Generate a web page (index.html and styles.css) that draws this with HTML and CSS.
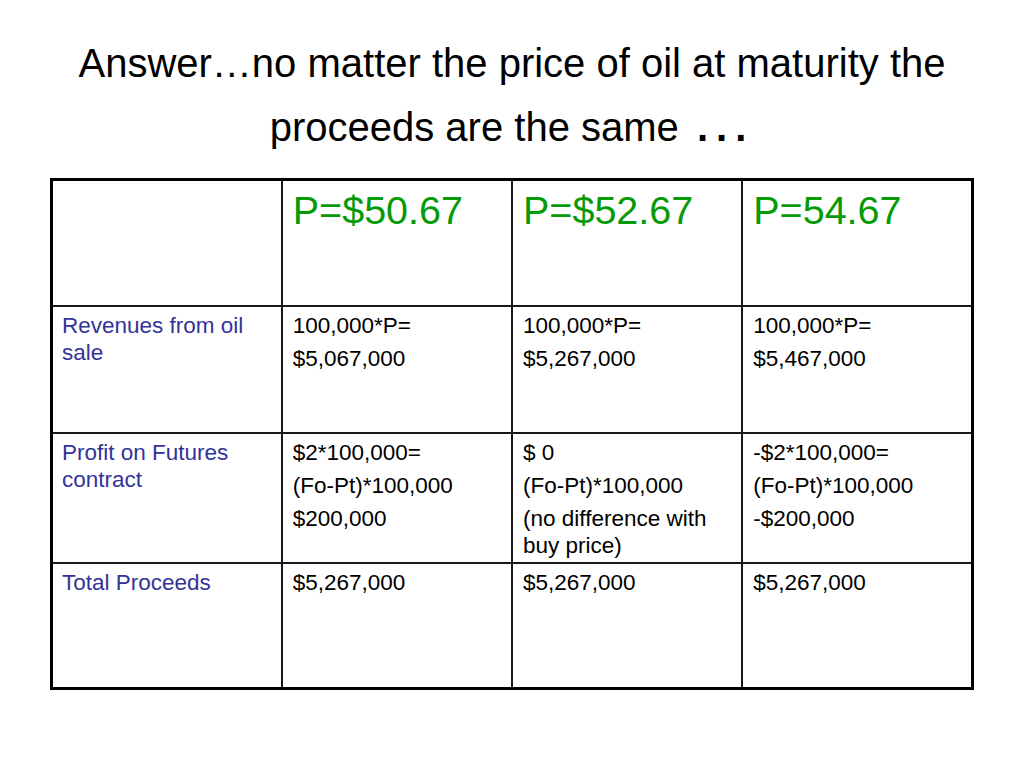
FILE: index.html
```html
<!DOCTYPE html>
<html>
<head>
<meta charset="utf-8">
<link rel="stylesheet" href="styles.css">
</head>
<body>
<h1 class="title">Answer…no matter the price of oil at maturity the<br>proceeds are the same <span class="dots">...</span></h1>
<table class="grid">
  <colgroup><col><col><col><col></colgroup>
  <tr class="r-head">
    <td></td>
    <td class="price">P=$50.67</td>
    <td class="price">P=$52.67</td>
    <td class="price">P=54.67</td>
  </tr>
  <tr class="r-1">
    <td class="label">Revenues from oil sale</td>
    <td><p>100,000*P=</p><p>$5,067,000</p></td>
    <td><p>100,000*P=</p><p>$5,267,000</p></td>
    <td><p>100,000*P=</p><p>$5,467,000</p></td>
  </tr>
  <tr class="r-2">
    <td class="label">Profit on Futures contract</td>
    <td><p>$2*100,000=</p><p>(Fo-Pt)*100,000</p><p>$200,000</p></td>
    <td><p>$ 0</p><p>(Fo-Pt)*100,000</p><p>(no difference with buy price)</p></td>
    <td><p>-$2*100,000=</p><p>(Fo-Pt)*100,000</p><p>-$200,000</p></td>
  </tr>
  <tr class="r-3">
    <td class="label">Total Proceeds</td>
    <td><p>$5,267,000</p></td>
    <td><p>$5,267,000</p></td>
    <td><p>$5,267,000</p></td>
  </tr>
</table>
</body>
</html>
```

FILE: styles.css
```css
html, body {
  margin: 0;
  padding: 0;
  background: #ffffff;
}
body {
  font-family: "Liberation Sans", Arial, sans-serif;
  color: #000000;
}
.title {
  margin: 0;
  padding-top: 31px;
  font-size: 40px;
  font-weight: normal;
  line-height: 64px;
  text-align: center;
}
.dots {
  font-weight: bold;
  letter-spacing: 8px;
  margin-left: 7px;
}
.grid {
  margin: 19px auto 0;
  width: 924px;
  table-layout: fixed;
  border-collapse: collapse;
  border: 3px solid #000;
}
.grid td {
  border: 2px solid #1a1a1a;
  vertical-align: top;
  padding: 5px 8px 0 10px;
  font-size: 22.5px;
  line-height: 27px;
}
.grid td p {
  margin: 0 0 6px;
}
.grid td p:last-child {
  margin-bottom: 0;
}
.r-head { height: 126px; }
.r-1 { height: 127px; }
.r-2 { height: 130px; }
.r-3 { height: 126px; }
.grid td.price {
  color: #069a06;
  font-size: 39.5px;
  line-height: 44px;
  padding-top: 7px;
}
.grid td.label {
  color: #333399;
  padding-left: 9px;
}
```
